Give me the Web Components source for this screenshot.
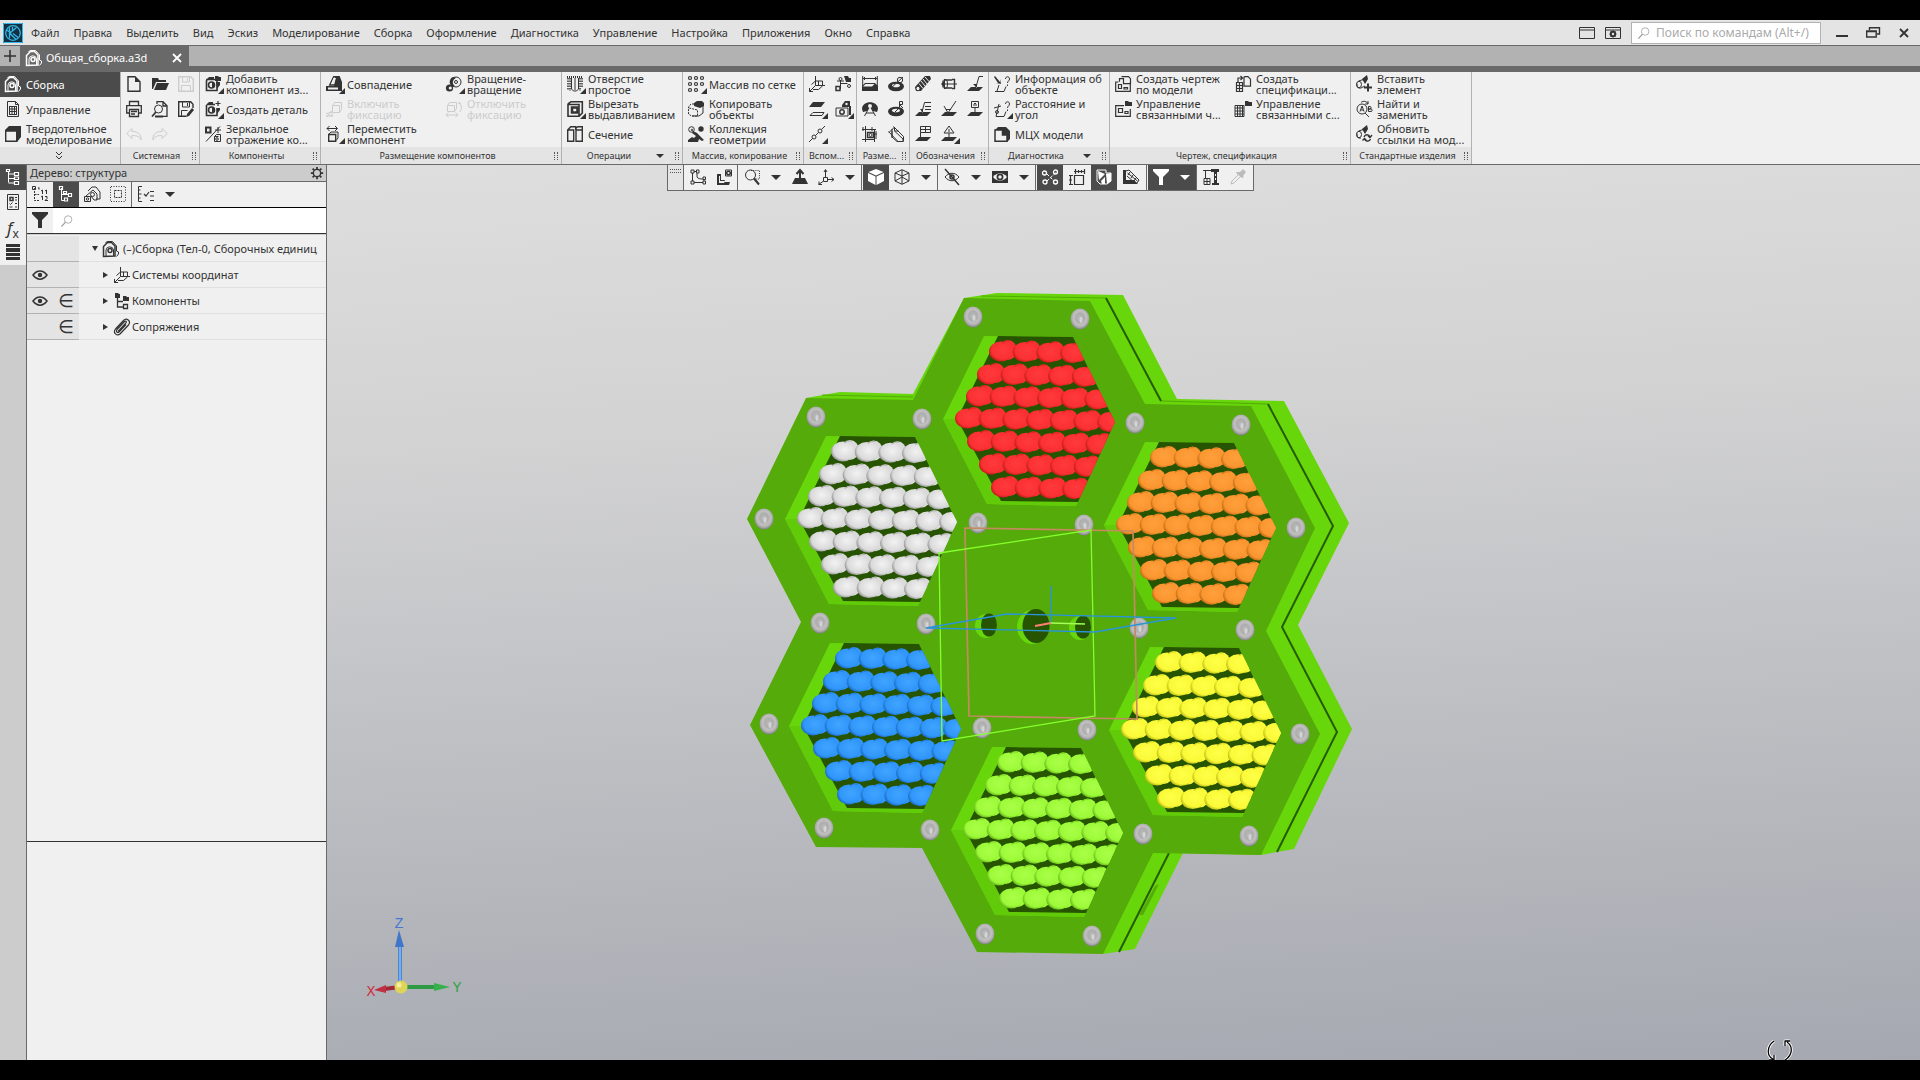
<!DOCTYPE html>
<html lang="ru">
<head>
<meta charset="utf-8">
<title>Общая_сборка.a3d</title>
<style>
  body {
    margin: 0;
    background: #000;
    color: #333;
    font: 11px/16px "Noto Sans", "Open Sans", sans-serif;
  }
</style>
</head>
<body>
<app-window>
  <menu-bar slot="menu"></menu-bar>
  <doc-tabs slot="tabs">Общая_сборка.a3d</doc-tabs>
  <app-ribbon slot="ribbon">
    <ribbon-group more>
      <ribbon-button icon="assembly" selected>Сборка</ribbon-button>
      <ribbon-button icon="sheet">Управление</ribbon-button>
      <ribbon-button icon="solid">Твердотельное<br>моделирование</ribbon-button>
    </ribbon-group>
    <ribbon-group label="Системная" cols="3" small>
      <ribbon-button icon="new" title="Создать"></ribbon-button>
      <ribbon-button icon="open" title="Открыть"></ribbon-button>
      <ribbon-button icon="save" title="Сохранить" disabled></ribbon-button>
      <ribbon-button icon="print" title="Печать"></ribbon-button>
      <ribbon-button icon="preview" title="Просмотр"></ribbon-button>
      <ribbon-button icon="saveas" title="Сохранить как"></ribbon-button>
      <ribbon-button icon="undo" title="Отменить" disabled></ribbon-button>
      <ribbon-button icon="redo" title="Повторить" disabled></ribbon-button>
    </ribbon-group>
    <ribbon-group label="Компоненты">
      <ribbon-button icon="addcomp" menu>Добавить<br>компонент из...</ribbon-button>
      <ribbon-button icon="newpart" menu>Создать деталь</ribbon-button>
      <ribbon-button icon="mirror">Зеркальное<br>отражение ко...</ribbon-button>
    </ribbon-group>
    <ribbon-group label="Размещение компонентов" cols="2">
      <ribbon-button icon="coincide" menu>Совпадение</ribbon-button>
      <ribbon-button icon="rotation" menu>Вращение-<br>вращение</ribbon-button>
      <ribbon-button icon="fixon" disabled>Включить<br>фиксацию</ribbon-button>
      <ribbon-button icon="fixoff" disabled>Отключить<br>фиксацию</ribbon-button>
      <ribbon-button icon="move" menu>Переместить<br>компонент</ribbon-button>
    </ribbon-group>
    <ribbon-group label="Операции" drop>
      <ribbon-button icon="hole" menu>Отверстие<br>простое</ribbon-button>
      <ribbon-button icon="cut" menu>Вырезать<br>выдавливанием</ribbon-button>
      <ribbon-button icon="section">Сечение</ribbon-button>
    </ribbon-group>
    <ribbon-group label="Массив, копирование">
      <ribbon-button icon="grid" menu>Массив по сетке</ribbon-button>
      <ribbon-button icon="copy">Копировать<br>объекты</ribbon-button>
      <ribbon-button icon="collection">Коллекция<br>геометрии</ribbon-button>
    </ribbon-group>
    <ribbon-group label="Вспом..." cols="2" small>
      <ribbon-button icon="lcs" title="Система координат"></ribbon-button>
      <ribbon-button icon="ctrlpoint" title="Контрольная точка"></ribbon-button>
      <ribbon-button icon="plane" title="Плоскость" menu></ribbon-button>
      <ribbon-button icon="bodies" title="Присоединительная точка" menu></ribbon-button>
      <ribbon-button icon="axis" title="Ось" menu></ribbon-button>
    </ribbon-group>
    <ribbon-group label="Разме..." cols="2" small>
      <ribbon-button icon="dimlinear" title="Линейный размер"></ribbon-button>
      <ribbon-button icon="dimdiam" title="Диаметральный размер"></ribbon-button>
      <ribbon-button icon="dimangle" title="Угловой размер"></ribbon-button>
      <ribbon-button icon="dimrad" title="Радиальный размер"></ribbon-button>
      <ribbon-button icon="dimauto" title="Производные размеры"></ribbon-button>
      <ribbon-button icon="dimslant" title="Размер"></ribbon-button>
    </ribbon-group>
    <ribbon-group label="Обозначения" cols="3" small>
      <ribbon-button icon="thread" title="Условное изображение резьбы"></ribbon-button>
      <ribbon-button icon="weld" title="Осевая линия"></ribbon-button>
      <ribbon-button icon="leader" title="Линия-выноска"></ribbon-button>
      <ribbon-button icon="mark" title="Знак маркировки"></ribbon-button>
      <ribbon-button icon="rough" title="Шероховатость"></ribbon-button>
      <ribbon-button icon="base" title="База"></ribbon-button>
      <ribbon-button icon="tolerance" title="Допуск формы"></ribbon-button>
      <ribbon-button icon="position" title="Позиция" menu></ribbon-button>
    </ribbon-group>
    <ribbon-group label="Диагностика" drop>
      <ribbon-button icon="info">Информация об<br>объекте</ribbon-button>
      <ribbon-button icon="distance" menu>Расстояние и<br>угол</ribbon-button>
      <ribbon-button icon="mass">МЦХ модели</ribbon-button>
    </ribbon-group>
    <ribbon-group label="Чертеж, спецификация" cols="2">
      <ribbon-button icon="drawing">Создать чертеж<br>по модели</ribbon-button>
      <ribbon-button icon="spec">Создать<br>спецификаци...</ribbon-button>
      <ribbon-button icon="drawings">Управление<br>связанными ч...</ribbon-button>
      <ribbon-button icon="specs">Управление<br>связанными с...</ribbon-button>
    </ribbon-group>
    <ribbon-group label="Стандартные изделия">
      <ribbon-button icon="insert">Вставить<br>элемент</ribbon-button>
      <ribbon-button icon="find">Найти и<br>заменить</ribbon-button>
      <ribbon-button icon="refresh">Обновить<br>ссылки на мод...</ribbon-button>
    </ribbon-group>
  </app-ribbon>
  <side-rail slot="rail"></side-rail>
  <tree-panel slot="panel" heading="Дерево: структура">
    <tree-row icon="assembly" open>(–)Сборка (Тел-0, Сборочных единиц</tree-row>
    <tree-row icon="lcs" eye>Системы координат</tree-row>
    <tree-row icon="comps" eye member>Компоненты</tree-row>
    <tree-row icon="clip" member>Сопряжения</tree-row>
  </tree-panel>
  <view-toolbar slot="view"></view-toolbar>
  <model-view slot="view"></model-view>
</app-window>

<script>
// glyphs on a 16x16 grid, stroked with currentColor; class f is filled, w is paper coloured
const ICONS = {
  logo: '<path class="f" style="fill:#12303f" d="M-2-2h20v20H-2z"/><g stroke="#35b5e8" stroke-width="1.3"><path d="M-1.500-1.500h19v19h-19z" stroke-width="1"/><circle cx="8" cy="8" r="7.300"/><path d="M4.500 2.500v11M7.500 2v4L4.500 8l6.500 6.500M7.500 6l4-3.500M8 8.500l5 4M1.500 5l5 3"/></g>',
  assembly: '<path d="M.5 15.500V5.500l4-4h4l3.500 3.500v10z" stroke-width="1.500"/><path d="M2.500 1.500L5 .5h4.500l4 4.500v5l2 1v2l-2 2.500"/><path d="M3 15V9a3.800 3.800 0 0 1 7.500 0v6"/><circle cx="7" cy="9.500" r="2" stroke-width="1.500"/>',
  sheet: '<path d="M2.500.5h8l3 3v12h-11z"/><path d="M10.500.5v3h3M4.500 5v9M7 5v9M9.500 5v9M11.500 5v9M4.500 5.500h7M4.500 8h7M4.500 10.500h7M4.500 13.500h7"/>',
  solid: '<path class="f" d="M4 0h12v11l-4 5V5H0V4z"/><path d="M.7 5h11v10.300H.7z" stroke-width="1.400"/>',
  new: '<path d="M2 .7h7l5 5v9.600H2z" stroke-width="1.400"/><path class="f" d="M9 1v5h5z"/>',
  open: '<path class="f" d="M0 2h6l1 2h7v2H4L1 13H0z"/><path class="f" d="M5 7h12l-3 7H2z"/>',
  save: '<path d="M.7.7h12l2.600 2.600v12H.7z" stroke-width="1.400"/><path d="M4.500 1v5h7V1M3.500 15V9.500h9V15M9.500 2v3"/>',
  saveas: '<path d="M15 7V3.300L12.700.7H.7v14.600H8" stroke-width="1.400"/><path d="M4.500 1v5h7V1M3.500 15V9.500h6M9.500 2v3"/><path class="f" d="M14 7l2 2-5 6-3 1 1-3z"/>',
  print: '<path d="M3.500 4.500v-4h9v4M3.500 12H.7V4.700h14.600V12h-3M3.500 8.500h9v7h-9zM5 10.500h6M5 13h4" stroke-width="1.300"/>',
  preview: '<path d="M5 3V.7h6l4 4v10.600h-4M11 1v4h4" stroke-width="1.300"/><circle cx="6.500" cy="8" r="4"/><path d="M4 11l-4 4.500M3 15.500h8" stroke-width="1.800"/>',
  undo: '<path d="M6 2.500L.7 7.500 6 12.500v-3c5 0 8 1 9 4.500.5-6-3-8.500-9-8.500z"/>',
  redo: '<path d="M10 2.500l5.300 5-5.300 5v-3c-5 0-8 1-9 4.500-.5-6 3-8.500 9-8.500z"/>',
  addcomp: '<path d="M2 3.500h10v11H1.500V5z" stroke-width="1.600"/><path class="f" d="M1 4l3-3h5v3zM10 0h3l1 1h2v4h-6z"/><circle cx="6.500" cy="9" r="3" stroke-width="1.600"/><path class="f" d="M7 6a3 3 0 0 1 0 6zM11 6h4v3l-3 4z"/>',
  newpart: '<path d="M2 3.500h8M12 7v7.500H1.500V4" stroke-width="1.600"/><path class="f" d="M1 4l3-3h4v3z"/><path d="M13 0v5M10.500 2.500h5" stroke-width="1.200"/><circle cx="6.500" cy="9" r="3" stroke-width="1.600"/><path class="f" d="M7 6a3 3 0 0 1 0 6zM12 7h3v2l-3 4z"/>',
  mirror: '<path d="M1 1.500h4.500v5H1z" stroke-width="2"/><path d="M1 15.500L15 .5M13 1v6M10 4h6"/><path d="M9.500 10.500l2-2h4v7h-6zM9.500 10.500h4"/><circle cx="12" cy="13" r="1.300"/>',
  coincide: '<path d="M3.700 9l4-8.300h5.500V9z" stroke-width="1.400"/><path class="f" d="M9 1h5l2 5v5H8zM0 10h16v5H0z"/><path class="w" d="M5 8l2.500-6H10L8 8zM2 11.500h10v2H2z"/>',
  rotation: '<circle cx="10" cy="6" r="5"/><circle cx="10" cy="6" r="1.500"/><path class="f" d="M8 1c-5 0-6 8-1 10l2-1c-3-2-3-6 1-8z"/><circle class="f" cx="3.500" cy="12" r="3.600"/><circle class="w" cx="4.300" cy="12" r="1.600"/>',
  fixon: '<path d="M6.500 4.500h7v7h-7zM6.500 4.500l2-3h7v7l-2 3M6 10l-3 2M0 13l5-2 2 4M1 16l2-3 3 3M0 15h7"/>',
  fixoff: '<path d="M1.500 4.500h7v6h-7zM1.500 4.500l2-3h7v6l-2 3M13 2c3 2 3 6 1 9M0 14h12M2.500 11.500L0 14l2.500 2M9.500 11.500L12 14l-2.500 2M12 2h3"/>',
  move: '<path d="M1 2.500h10M3.500 0L1 2.500 3.500 5M9 0l2.500 2.500L9 5"/><path d="M2.700 8.500h7v6.800h-7z" stroke-width="1.400"/><path d="M3 8l2-2h7v6l-2 2.500"/>',
  hole: '<path d="M0 1h16" stroke-width="2" stroke-dasharray="1 1"/><path d="M1 2v12M3 2v13M13 2v13M15 2v9" stroke-width="1.500" stroke-dasharray="1.500 1"/><path d="M4.500 2v11l2 2h3l2-2V2"/><path d="M8 2v12"/>',
  cut: '<path d="M1 3.500h11v11.700H1zM1 3l3-2.300h11.300V12l-3 3" stroke-width="1.600"/><path d="M5 6.500h5.500v5H5z" stroke-width="2.500"/>',
  section: '<path d="M.7 4h6v11.300h-6zM.7 4l3-3.300h5v3M9 4h6.300v11.300H9zM9 4V2l2-1.300h4.300V4" stroke-width="1.400"/>',
  grid: '<g stroke-width="1.200"><circle cx="2" cy="2" r="1.500"/><circle cx="8" cy="2" r="1.500"/><circle cx="14" cy="2" r="1.500"/><circle cx="2" cy="8" r="1.500"/><circle cx="8" cy="8" r="1.500"/><circle cx="14" cy="8" r="1.500"/><circle cx="2" cy="14" r="1.500"/><circle cx="8" cy="14" r="1.500"/></g>',
  copy: '<path class="f" d="M6 2l3-2h5l2 2v3l-4 2-6-2z"/><path d="M15 5v7l-4 3H4"/><path d="M6 3H3L.5 6v7l3 2h6V9L1 7" stroke-dasharray="2 1"/>',
  collection: '<circle cx="3.500" cy="3.500" r="2.800"/><circle cx="4" cy="4" r=".8"/><circle class="f" cx="13" cy="3" r="2.700"/><path class="f" d="M5 5l4 2 7 7-2 1-3-2-1 3H0v-2l4-3 2 1 2-2-4-3z"/>',
  lcs: '<path d="M6.500 9.500V0M6.500 9.500H16M6.500 9.500L.5 15.500M.5 12v3.500H4M2.500 8.500l4-3.500h7v5l-4 3.500H4M9.500 9.500V5"/>',
  ctrlpoint: '<path d="M5.500 4v9M5.500 7.500h7M2 5h7"/><path class="f" d="M9 0h4l1 2h2v4h-5z"/><circle cx="5.500" cy="3" r="1.500"/><circle cx="14" cy="10" r="1.500"/><path d="M1 10.500h4v4H1z" stroke-width="1.500"/>',
  plane: '<path class="f" d="M4 1h12l-4 5H0z"/><path d="M4 11.500h11l-2 3H1z"/>',
  bodies: '<path class="f" d="M1 6h6V4l3-4h5v5h1v9h-2V6z"/><circle class="w" cx="11.500" cy="3" r="1.200"/><path class="w" d="M1 7h12v8H1z" stroke="currentColor"/><circle cx="7" cy="11" r="2.200" stroke-width="1.500"/>',
  axis: '<path d="M0 16L16 0"/><circle class="w" cx="11" cy="5" r="2" stroke="currentColor"/><circle class="w" cx="5" cy="11" r="2" stroke="currentColor"/>',
  dimlinear: '<path d="M.7 0v11M15.300 0v11M1 2.500h14M3 1L1.500 2.500 3 4M13 1l1.500 1.500L13 4"/><path class="f" d="M0 10l3-3h10l3 3v5H0z"/><path class="w" d="M1 10.500l2.500-2.500h9L10 10.500z"/>',
  dimdiam: '<ellipse class="f" cx="8" cy="10.500" rx="8" ry="4.800"/><ellipse class="w" cx="8" cy="9.500" rx="4" ry="1.800"/><path d="M2 13L15 1"/><circle cx="12" cy="4" r="2.700"/>',
  dimangle: '<path class="f" d="M0 8c0-9 16-9 16 0l-1 3-4-1-3-5-3 5-4 1z"/><path d="M8 5L2.500 15M8 5l5.500 10M4 12h8"/><circle class="w" cx="8" cy="5" r="2"/>',
  dimrad: '<ellipse class="f" cx="8" cy="10.500" rx="8" ry="4.800"/><ellipse class="w" cx="8" cy="9.500" rx="4" ry="1.800"/><path d="M7 11l4-4M11.500 6.500v-6h3v3h-3l3.500 3.500"/>',
  dimauto: '<path d="M3.500 0v16M12.500 3v13M0 3.500h14M0 13.500h13M1 1v4M14 5v8M10 1v4M15 8h-3"/><path d="M5.500 6.500h6v5h-6z" stroke-width="1.500"/><circle cx="8.500" cy="9" r="1.500"/>',
  dimslant: '<path d="M1 6.500L6.500 1v4l8.500 8v2.500H9L4 11V5M6.500 5h4M.5 5.500L10 15.500M5.500.5L15.500 10.500v5M4 3v9"/>',
  thread: '<path class="f" d="M10 0h5l1 3L6 15H1l-1-4z"/><g stroke="#f0f0f0"><path d="M4 7.500l4 5M6 5l4 5M8 3l4 5M10 1l4 4.500"/></g><ellipse class="w" cx="3" cy="12.500" rx="2" ry="2.300" stroke="currentColor"/>',
  weld: '<path d="M0 8h16"/><path d="M3 4h8M3 12h8M11 3.500h2.500v9H11" stroke-width="1.400"/><ellipse cx="4" cy="8" rx="2.500" ry="4.500"/><path class="f" d="M4 3.500v9c-3-1-3-8 0-9z"/>',
  leader: '<path d="M16 .5h-4L9 11"/><path class="f" d="M6 8l4 4V8zM4 11h12l-4 4H0z"/>',
  mark: '<path d="M16 1.500H9.500L7 11M10 5.500h6M10 8.500h6"/><path class="f" d="M5 8l3 4V8zM4 11h12l-4 4H0z"/>',
  rough: '<path d="M3 5l4 7L15 0M5 8.500h5"/><path class="f" d="M4 11h12l-4 4H0z"/>',
  base: '<path d="M4.500.5h7v6h-7zM8 6.500V11M7 5V3l1-1 1 1v2"/><path class="f" d="M4 11h12l-4 4H0z"/>',
  tolerance: '<path d="M5.500.5h10v6h-10zM10.500.5v6M5.500 3.500h10M5.500 6.500V12"/><path class="f" d="M4 11h12l-4 4H0z"/>',
  position: '<path d="M8 0L3 7h10zM8 3v3M8 7v4"/><path class="f" d="M4 11h12l-4 4H0z"/>',
  info: '<path class="f" d="M1 0l5 6V3l1 5-5-1h2L0 1z"/><path d="M1 15.500h9l2-5M5 9l-2 6"/><path d="M11.500 3c0-3 4-3 4 0 0 2-2 2-2 4M13.500 8.500V10"/>',
  distance: '<path d="M0 7l7-2M5 3L2 15.500h8l2-5"/><circle cx="3" cy="11" r="1.500"/><path d="M11.500 3c0-3 4-3 4 0 0 2-2 2-2 4M13.500 8.500V10"/>',
  mass: '<path class="f" d="M1 4l3-3h8l4 4v8l-3 3V9H9V4z"/><path d="M1 4h7.500v5H13v6.300H1z" stroke-width="1.500"/>',
  drawing: '<path d="M3.500 6H.7v9.300h14.600V6M6.500.7h7l2 2v5h-7v-5h-4v3" stroke-width="1.200"/><path d="M3.500 8.500h3v4h-3zM9 11.500h3.500v1.500H9z" stroke-width="1.200"/>',
  drawings: '<path d="M9 4.700H.7v10.600h14.600V8" stroke-width="1.200"/><path class="f" d="M10 0h3l1 1h3v4h-7z"/><path d="M3.500 7.500h4v4h-4zM10 10.500h3v2h-3z" stroke-width="1.200"/>',
  spec: '<path d="M1.500 6.500h6v9h-6zM4.500 6.500v9M1.500 9.500h6M1.500 12.500h6M3 6V2h4M5.500 0l2 2-2 2M10 .7h3l2.500 2.500v7H9v-9z" stroke-width="1.200"/>',
  specs: '<path d="M0 4.500h9v11H0zM0 7h9M0 10h9M0 13h9M2.500 4v12M5 4v12M7.500 4v12"/><path class="f" d="M10 0h3l1 1h3v4h-7z"/>',
  insert: '<path d="M2.500 5l5-1.500M1 7.500c0 5 2 5 4 4.500l4-2"/><ellipse cx="3" cy="8.500" rx="2.500" ry="3.200"/><path class="f" d="M6 3l5-4 1 4-3 5z"/><path d="M12 7.500v8M8 11.500h8" stroke-width="2"/>',
  find: '<circle cx="6" cy="8" r="5"/><path d="M4 10.500L6 5l2 5.500M5 9h2M12.500 5.500v5H15c1.500 0 1.500-2.500 0-2.500h-2.500H14c1.500 0 1.500-2.500 0-2.500zM9 12l4 4M5 1.500C7-.5 11 0 12 3M12 0v3H9"/>',
  refresh: '<path d="M2.500 5l5-1.500M1 7.500c0 5 2 5 4 4.500"/><ellipse cx="3" cy="8.500" rx="2.500" ry="3.200"/><path class="f" d="M6 3l5-4 1 4-3 5z"/><path d="M8 11c1-3 5-3 6 0M16 9l-2 2.500L12 10M14.500 13c-1 3-5 3-6 0M6.500 14.500l2-2 2 2" stroke-width="1.300"/>',
  treetab: '<path d="M3.500 2v11.500M3.500 5H9M3.500 9.500H9M3.500 14H9"/><path d="M1.500.5h3v2h-3zM9.500 3.500h4v3h-4zM9.500 8h4v2.500h-4zM9.500 12.500h4v3h-4z" stroke-width="1.200"/>',
  props: '<path d="M2.500.5h11v15h-11z"/><path d="M5 3.500h3v3H5z" stroke-width="1.500"/><path d="M10 3.500h2M10 6h2M4.500 9.500l1 1 2-2M10 9.500h2M4.500 13h3M10 13h2"/>',
  layers: '<path class="f" d="M1 0h14v3H1zM1 4h14v4H1zM1 9h14v3H1zM1 13h14v3H1z"/>',
  numbered: '<path d="M2.500 2v12.500H7M2.500 8.500H7" stroke-dasharray="2 1"/><path d="M.5.5h3v3h-3zM7 1.500v2M6 2h1M10.500 4v4M9 5l1.500-1M14.500 4v4M13 5l1.500-1M10.500 10v4M9 11l1.500-1M13 10.500h2v2l-2 2h3"/>',
  struct: '<path d="M3.500 2v12.500H7M3.500 8.500H10"/><path d="M1.500.5h3v3h-3zM5.500 5.500h3v2h-3zM10.500 7.500h3v3h-3zM6.500 12h3v3h-3z" stroke-width="1.200"/>',
  parts: '<path d="M4 5l4-4h4l4 5v7h-4"/><path d="M.5 10.500h6v5h-6zM2 10L9 4l4 4v6h-3L7 10"/><circle cx="8.500" cy="8.500" r="2"/><circle cx="3.500" cy="13" r="1.200"/>',
  area: '<path d="M1 .5h15M1 15.500h15M.5 1v15M15.500 1v15" stroke-dasharray="1 1.500"/><path d="M4.500 4.500h7v7h-7z" stroke-dasharray="2 1"/>',
  checks: '<path d="M4 .5H.5v15H4M.5 8h3M.5 4h2M.5 12h2"/><path d="M6 8l2 2 3-4M12 5.500h4M12 10h4M12 14.500h4" stroke-width="1.200"/>',
  funnel: '<path class="f" d="M0 0h16v2l-6 6v8H6V8L0 2z"/>',
  loupe: '<circle cx="9.500" cy="6" r="5"/><path d="M6 9.500l-5.500 6" stroke-width="1.600"/>',
  gear: '<circle cx="8" cy="8" r="4.200" stroke-width="1.600"/><path d="M8 1v2.500M8 12.500V15M1 8h2.500M12.500 8H15M3 3l1.800 1.800M11.200 11.200L13 13M13 3l-1.800 1.800M4.800 11.200L3 13" stroke-width="2"/>',
  eye: '<path d="M1 8c4-5.500 10-5.500 14 0-4 5.500-10 5.500-14 0z" stroke-width="1.500"/><circle class="f" cx="8" cy="8" r="2.200"/>',
  comps: '<path class="f" d="M1 0h3l1 1h1v4H1zM9 3h3l1 1h2v4H9z"/><path d="M3.500 5v9H10M3.500 8.500H9M9.500 11.500h4v4h-4z" stroke-width="1.300"/>',
  clip: '<path d="M6 15l8.500-9c3-4-2-8-5-4.500L1.500 10c-3 4 1.500 7.500 4.500 5M4 12.500l8-8.500c1-1.500-.5-2.500-1.500-1.500L3 10.500c-1.500 2 .5 4 2 2.500l7-7.500" stroke-width="1.200"/>',
  contour: '<path d="M2.500 2v11M2.500 13.500H14M2.500 2.500H7V8c1 2 4 2 7 2v3"/><g><path class="w" stroke="currentColor" d="M1 1h3v3H1zM6.500 1h2.500v3H6.500zM1 12h3v3H1zM13 12h2.500v3H13zM13 8h2.500v2.500H13z"/></g>',
  sketch: '<path class="f" d="M1 5h4v6h4l-1 2h6l-1 3H1z"/><path class="w" d="M3 7h1v5h5l-1 2H3z"/><path d="M9.500 1h6v6h-6z"/><circle cx="12.500" cy="4" r="1.800" stroke-width="1.500"/>',
  zoomarea: '<circle cx="6.500" cy="6" r="5"/><path d="M10 9.500l5 6" stroke-width="2"/><path d="M7 1.500h8.500V10H11" stroke-dasharray="1 1.200"/>',
  normal: '<path class="f" d="M3 9h10l3 6H0z"/><path d="M8 12V2M4.500 5L8 1l3.500 4" stroke-width="2"/>',
  orient: '<path d="M5.500 8.500h4v4h-4zM7.500 8V1M9.500 10.500H16M5 12.500L.5 15.500M6 3l1.500-2.500L9 3M13.500 8.500l2.500 2-2.500 2M1 12.500v3h3"/>',
  cube: '<path class="f" d="M8 0l7.500 3L8 6.500.5 3zM0 4l7.500 3.500V16L0 12zM16 4L8.500 7.500V16l7.500-4z"/>',
  wire: '<path d="M8 .7l7 3.300v8L8 15.300 1 12V4zM1 4l7 3 7-3M8 7v8M1 12l7-4 7 4M8 1v6"/>',
  hide: '<path d="M1 8c4-5 10-5 14 0-4 5-10 5-14 0z"/><circle cx="8" cy="8" r="2" stroke-width="1.500"/><path d="M1 0l14 16" stroke-width="1.500"/>',
  eyebox: '<path class="f" d="M0 2h16v12H0z"/><path class="w" d="M1 8c4-5 10-5 14 0-4 5-10 5-14 0z"/><circle cx="8" cy="8" r="2.600" stroke-width="1.700"/>',
  points: '<path d="M5 12L15 2.500M5 5l7 7" stroke-dasharray="3 1.500"/><g stroke-width="1.300"><circle cx="2.500" cy="4" r="2"/><circle cx="13.500" cy="3" r="2"/><circle cx="3" cy="13" r="2"/><circle cx="13.500" cy="13" r="2"/></g>',
  dims: '<path d="M5.500 6.500h9v9h-9zM5 2.500h11M6.500 0v5M9.500 1v3M12.500 1v3M15.500 0v5M1.500 6v10M0 6.500h4M0 11h3M0 15.500h4" stroke-width="1.200"/>',
  shaded: '<path d="M1 1h9v3h5v8l-4 3H4l-3-3z"/><path class="f" d="M2 2l7 3-6 6zM10 5l5-1v8l-4 3zM5 12l4-4v7H6z"/>',
  ruler: '<path class="f" d="M0 1h3v10h8l4 4H0z"/><path d="M4.500 4l10 8M4 7l8 7M3 2l3-1 10 10-2 3M7 3L5 6M10 6L8 9M13 9l-2 3"/>',
  crane: '<path class="f" d="M8 0h8v3h-2v11h2v2H9v-2h2V3H8z"/><path class="w" d="M12 5h1v2h-1zM12 9h1v2h-1z"/><path d="M0 1.500h9M2.500 2v7M1 9.500h6v6H1zM1 12.500h6M4 9.500v6"/>',
  pipette: '<path class="f" d="M10 3l3-3 3 3-3 4 1 1-2 1-6-5 1-1z"/><path d="M9 5L2 12l-1 3 3-1 7-7"/>',
  winplain: '<path d="M.5 2.500h15v11H.5zM0 5h16"/>',
  wingear: '<path d="M.5 2.500h15v11H.5zM0 5h16"/><circle cx="8" cy="9" r="2.200" stroke-width="2"/><path d="M8 5.500v7M4.500 9h7M5.500 6.500l5 5M10.500 6.500l-5 5"/><circle class="w" cx="8" cy="9" r="1.200"/>',
  min: '<path d="M2 11h12" stroke-width="2"/>',
  restore: '<path d="M1.700 6h9.500v6H1.700zM4.500 5V2.700h10V9H12M1 6.500h10" stroke-width="1.400"/>',
  close: '<path d="M4 4l8 8M12 4l-8 8" stroke-width="1.800"/>',
  chevrons: '<path d="M5 4l3 3 3-3M5 8l3 3 3-3"/>',
  plus: '<path d="M8 2v12M2 8h12" stroke-width="1.600"/>'
};

function define(tag, render) {
  customElements.define(tag, class extends HTMLElement {
    connectedCallback() {
      if (this.shadowRoot) return;
      const root = this.attachShadow({mode: 'open'});
      const template = document.createElement('template');
      template.innerHTML = render(this);
      root.appendChild(template.content.cloneNode(true));
    }
  });
}

const buttonReset = `
  button {
    border: 0;
    margin: 0;
    padding: 0;
    background: none;
    color: inherit;
    font: inherit;
    text-align: left;
  }
`;

define('ui-icon', el => `
  <style>
    :host { display: block; width: 16px; height: 16px; flex: none; }
    svg { display: block; width: 100%; height: 100%; overflow: visible; fill: none; stroke: currentColor; }
    .f { fill: currentColor; stroke: none; }
    .w { fill: var(--paper, #f0f0f0); }
    .w:not([stroke]) { stroke: none; }
  </style>
  <svg viewBox="0 0 16 16" aria-hidden="true">${ICONS[el.getAttribute('name')]}</svg>
`);

define('app-window', () => `
  <style>
    :host { display: flex; flex-direction: column; box-sizing: border-box; height: 100vh; padding: 20px 0; }
    .body { flex: 1; display: flex; min-height: 0; background: #ccc; }
    .view { flex: 1; position: relative; min-width: 0; }
  </style>
  <slot name="menu"></slot>
  <slot name="tabs"></slot>
  <slot name="ribbon"></slot>
  <div class="body">
    <slot name="rail"></slot>
    <slot name="panel"></slot>
    <main class="view"><slot name="view"></slot></main>
  </div>
`);

const MENU = ['Файл', 'Правка', 'Выделить', 'Вид', 'Эскиз', 'Моделирование', 'Сборка', 'Оформление',
  'Диагностика', 'Управление', 'Настройка', 'Приложения', 'Окно', 'Справка'];

define('menu-bar', () => `
  <style>
    ${buttonReset}
    :host { display: flex; align-items: center; height: 25px; background: #e4e4e4; border-bottom: 1px solid #696969; --paper: #e4e4e4; }
    .logo { margin: 0 10px 0 5px; }
    nav { display: flex; gap: 14px; flex: 1; }
    .tools { display: flex; align-items: center; gap: 10px; margin-right: 10px; }
    label { display: flex; align-items: center; box-sizing: border-box; width: 190px; height: 22px; padding: 0 6px; gap: 6px; border: 1px solid #b2b2b2; background: #fff; color: #999; font-size: 12px; }
    label ui-icon { width: 12px; height: 12px; }
    input { flex: 1; min-width: 0; border: 0; padding: 0; background: none; font: inherit; outline: 0; }
    input::placeholder { color: #aaa; opacity: 1; }
    .win { display: flex; gap: 15px; margin: 0 8px 0 13px; }
  </style>
  <ui-icon class="logo" name="logo"></ui-icon>
  <nav>${MENU.map(m => `<button>${m}</button>`).join('')}</nav>
  <div class="tools">
    <button aria-label="Окно"><ui-icon name="winplain"></ui-icon></button>
    <button aria-label="Настройка окна"><ui-icon name="wingear"></ui-icon></button>
  </div>
  <label><ui-icon name="loupe"></ui-icon><input type="text" placeholder="Поиск по командам (Alt+/)" aria-label="Поиск по командам"></label>
  <div class="win">
    <button aria-label="Свернуть"><ui-icon name="min"></ui-icon></button>
    <button aria-label="Восстановить"><ui-icon name="restore"></ui-icon></button>
    <button aria-label="Закрыть"><ui-icon name="close"></ui-icon></button>
  </div>
`);

define('doc-tabs', () => `
  <style>
    ${buttonReset}
    :host { display: flex; height: 20px; background: #b2b2b2; border-bottom: 6px solid #696969; }
    .add { width: 20px; padding-left: 2px; }
    .tab { display: flex; align-items: center; box-sizing: border-box; width: 169px; padding: 3px 4px 0 6px; gap: 4px; background: #696969; color: #fff; --paper: #696969; }
    .name { flex: 1; white-space: nowrap; }
  </style>
  <button class="add" aria-label="Новый документ"><ui-icon name="plus"></ui-icon></button>
  <div class="tab">
    <ui-icon name="assembly"></ui-icon>
    <span class="name"><slot></slot></span>
    <button aria-label="Закрыть вкладку"><ui-icon name="close"></ui-icon></button>
  </div>
`);

define('app-ribbon', () => `
  <style>
    :host { display: flex; background: #f0f0f0; border-bottom: 1px solid #696969; }
  </style>
  <slot></slot>
`);

define('ribbon-group', el => `
  <style>
    ${buttonReset}
    :host { display: flex; flex-direction: column; flex: none; border-right: 1px solid #b2b2b2; }
    .cells {
      display: grid;
      grid-template-columns: repeat(${el.getAttribute('cols') || 1}, ${el.hasAttribute('small') ? 26 : 120}px);
      grid-template-rows: repeat(3, 25px);
    }
    footer { display: flex; align-items: center; height: 17px; background: #e4e4e4; font-size: 9px; padding-right: 3px; }
    .name { flex: 1; text-align: center; white-space: nowrap; }
    .drop { border: solid transparent; border-width: 4px 4px 0; border-top-color: #333; margin-right: 11px; }
    .grip { width: 2px; height: 8px; border: dotted #555; border-width: 0 1px; }
    .more { flex: 1; display: flex; justify-content: center; }
  </style>
  <div class="cells"><slot></slot></div>
  <footer>
    ${el.hasAttribute('more')
      ? '<button class="more" aria-label="Ещё"><ui-icon name="chevrons"></ui-icon></button>'
      : `<span class="name">${el.getAttribute('label')}</span>
         ${el.hasAttribute('drop') ? '<span class="drop"></span>' : ''}
         <span class="grip"></span>`}
  </footer>
`);

define('ribbon-button', el => `
  <style>
    ${buttonReset}
    :host { display: block; min-width: 0; }
    :host([selected]) { background: #4b4b4b; color: #fff; --paper: #4b4b4b; }
    :host([disabled]) { color: #ccc; }
    button { display: flex; align-items: center; width: 100%; height: 25px; padding: 0 0 1px 5px; line-height: 11px; white-space: nowrap; }
    .icon { position: relative; width: 21px; flex: none; }
    :host([menu]) .icon::after {
      content: "";
      position: absolute;
      right: 2px;
      bottom: -2px;
      border-left: 6px solid transparent;
      border-bottom: 6px solid #333;
    }
  </style>
  <button ${el.hasAttribute('disabled') ? 'disabled' : ''} ${el.title ? `aria-label="${el.title}"` : ''}>
    <span class="icon"><ui-icon name="${el.getAttribute('icon')}"></ui-icon></span>
    <span><slot></slot></span>
  </button>
`);

define('tool-button', el => `
  <style>
    ${buttonReset}
    :host { display: block; background: #f0f0f0; }
    :host([on]) { background: #4b4b4b; color: #fff; --paper: #4b4b4b; }
    :host([disabled]) { color: #bbb; }
    button { display: flex; align-items: center; justify-content: center; width: 26px; height: 25px; padding-bottom: 1px; }
    :host([drop]) button { width: 22px; }
    .arrow { border: solid transparent; border-width: 5px 5px 0; border-top-color: currentColor; }
  </style>
  <button aria-label="${el.title}" ${el.hasAttribute('disabled') ? 'disabled' : ''}>
    ${el.hasAttribute('drop') ? '<span class="arrow"></span>' : `<ui-icon name="${el.getAttribute('icon')}"></ui-icon>`}
  </button>
`);

define('side-rail', () => `
  <style>
    ${buttonReset}
    :host { display: block; width: 26px; border-right: 1px solid #696969; background: #ccc; }
    .fx { display: block; width: 26px; height: 25px; background: #f0f0f0; text-align: center; font: italic 17px/20px "Noto Sans", sans-serif; }
    sub { font-size: 12px; line-height: 1px; font-style: normal; }
  </style>
  <tool-button icon="treetab" title="Дерево" on></tool-button>
  <tool-button icon="props" title="Параметры"></tool-button>
  <button class="fx" aria-label="Переменные">f<sub>x</sub></button>
  <tool-button icon="layers" title="Слои"></tool-button>
`);

define('tree-panel', el => `
  <style>
    ${buttonReset}
    :host { display: flex; flex-direction: column; width: 299px; border-right: 1px solid #696969; background: #f0f0f0; overflow: hidden; }
    header { display: flex; align-items: center; justify-content: space-between; height: 16px; padding: 0 1px 0 3px; background: #ccc; border-bottom: 1px solid #696969; }
    header ui-icon { width: 14px; height: 14px; margin-right: 1px; }
    .tools { display: flex; border-bottom: 1px solid #000; }
    .sep { width: 1px; background: #696969; margin-right: 1px; }
    .filter { display: flex; height: 25px; background: #fff; border-bottom: 1px solid #333; }
    label { flex: 1; display: flex; align-items: center; gap: 6px; padding-left: 8px; color: #999; }
    label ui-icon { width: 12px; height: 12px; }
    input { flex: 1; min-width: 0; border: 0; padding: 0; outline: 0; font: inherit; }
    .rows { flex: 1; padding-top: 1px; border-top: 1px solid #ccc; }
    .lower { box-sizing: border-box; height: 219px; border-top: 1px solid #333; }
  </style>
  <header><span>${el.getAttribute('heading')}</span><button aria-label="Настройка дерева"><ui-icon name="gear"></ui-icon></button></header>
  <div class="tools">
    <tool-button icon="numbered" title="Последовательность"></tool-button>
    <tool-button icon="struct" title="Структура" on></tool-button>
    <tool-button icon="parts" title="Типы"></tool-button>
    <tool-button icon="area" title="Зоны"></tool-button>
    <span class="sep"></span>
    <tool-button icon="checks" title="Состав"></tool-button>
    <tool-button drop title="Состав, список"></tool-button>
  </div>
  <div class="filter">
    <tool-button icon="funnel" title="Фильтр"></tool-button>
    <label><ui-icon name="loupe"></ui-icon><input type="text" aria-label="Поиск в дереве"></label>
  </div>
  <div class="rows"><slot></slot></div>
  <div class="lower"></div>
`);

define('tree-row', el => `
  <style>
    :host { display: flex; align-items: stretch; height: 26px; overflow: hidden; white-space: nowrap; }
    .flags { display: flex; flex: none; box-sizing: border-box; width: 52px; background: #e4e4e4; border-bottom: 1px solid #b2b2b2; }
    .flags > * { width: 26px; display: flex; align-items: center; justify-content: center; font: 18px/20px "DejaVu Sans", sans-serif; }
    .item { flex: 1; display: flex; align-items: center; gap: 2px; padding-left: 24px; border-bottom: 1px solid #e0e0e0; }
    :host([open]) .item { padding-left: 13px; gap: 4px; }
    .arrow { border-style: solid; border-color: transparent transparent transparent #333; border-width: 3px 0 3px 5px; margin-right: 4px; }
    :host([open]) .arrow { border-color: #333 transparent transparent; border-width: 5px 3px 0; margin-right: 1px; }
  </style>
  <span class="flags">
    <span>${el.hasAttribute('eye') ? '<ui-icon name="eye"></ui-icon>' : ''}</span>
    <span>${el.hasAttribute('member') ? '∈' : ''}</span>
  </span>
  <span class="item">
    <span class="arrow"></span>
    <ui-icon name="${el.getAttribute('icon')}"></ui-icon>
    <span><slot></slot></span>
  </span>
`);

define('view-toolbar', () => `
  <style>
    :host { position: absolute; z-index: 1; top: 0; left: 340px; display: flex; background: #f0f0f0; border: solid #696969; border-width: 0 1px 1px; }
    .grip { width: 15px; background: #e4e4e4; }
    .grip::before { content: ""; display: block; width: 11px; height: 2px; margin: 4px 2px; border: dotted #555; border-width: 1px 0; }
    .set { display: flex; padding-left: 1px; border-left: 1px solid #696969; }
    .gaps { gap: 1px; padding-right: 2px; }
  </style>
  <div class="grip"></div>
  <div class="set">
    <tool-button icon="contour" title="Эскиз"></tool-button><tool-button icon="sketch" title="Эскиз детали"></tool-button>
  </div>
  <div class="set">
    <tool-button icon="zoomarea" title="Масштаб"></tool-button><tool-button drop title="Масштаб, список"></tool-button>
    <tool-button icon="normal" title="Нормально к"></tool-button><tool-button icon="orient" title="Ориентация"></tool-button>
    <tool-button drop title="Ориентация, список"></tool-button>
  </div>
  <div class="set">
    <tool-button icon="cube" title="Полутоновое" on></tool-button><tool-button icon="wire" title="Каркас"></tool-button>
    <tool-button drop title="Отображение, список"></tool-button>
  </div>
  <div class="set">
    <tool-button icon="hide" title="Скрыть"></tool-button><tool-button drop title="Скрыть, список"></tool-button>
    <tool-button icon="eyebox" title="Видимость"></tool-button><tool-button drop title="Видимость, список"></tool-button>
  </div>
  <div class="set gaps">
    <tool-button icon="points" title="Точки" on></tool-button><tool-button icon="dims" title="Размеры"></tool-button>
    <tool-button icon="shaded" title="Упрощения" on></tool-button><tool-button icon="ruler" title="Линейка"></tool-button>
  </div>
  <div class="set">
    <tool-button icon="funnel" title="Фильтры" on></tool-button><tool-button drop title="Фильтры, список" on></tool-button>
  </div>
  <div class="set gaps">
    <tool-button icon="crane" title="Сборка"></tool-button><tool-button icon="pipette" title="Свойства" disabled></tool-button>
  </div>
`);

// every cell is the red one shifted by dx, dy
const CELLS = [
  {id: 'red', dx: 0, dy: 0, light: '#ff3a3c', color: '#fb3033', dark: '#b81a18'},
  {id: 'white', dx: -158, dy: 100, light: '#f2f2f2', color: '#dadada', dark: '#8a8a8a'},
  {id: 'orange', dx: 161, dy: 106, light: '#ffa03c', color: '#fb9630', dark: '#b86812'},
  {id: 'blue', dx: -154, dy: 307, light: '#40a4ff', color: '#3096fa', dark: '#1a66b8'},
  {id: 'green', dx: 8, dy: 411, light: '#aaff48', color: '#9cfa38', dark: '#62b018'},
  {id: 'yellow', dx: 166, dy: 311, light: '#ffff48', color: '#fafa38', dark: '#b4b412'}
];
const ROWS = [[1001, 351, 4], [989, 374, 5], [978, 396, 6], [967, 418, 7], [979, 441, 6], [991, 464, 5], [1003, 487, 4]];
const SCREWS = [[973, 317], [1080, 319], [922, 419], [816, 417], [1135, 423], [1241, 425], [764, 519], [978, 523],
  [1084, 525], [1296, 528], [820, 623], [926, 624], [1139, 628], [1245, 630], [769, 724], [982, 728], [1087, 730],
  [1300, 734], [824, 828], [930, 830], [1143, 834], [1249, 836], [985, 934], [1092, 936]];

function cell({id, dx, dy}) {
  const balls = ROWS.map(([x, y, n]) => {
    let row = '';
    for (let i = 0; i < n; i++) {
      const cx = x + i * 23.7;
      const cy = y + i * 0.6;
      row += `
        <ellipse class="bump" cx="${cx + 7}" cy="${cy - 1}" rx="9" ry="10"/>
        <ellipse cx="${cx}" cy="${cy + 0.5}" rx="12" ry="10"/>
        <path class="edge" d="M${cx + 1} ${cy - 8}q4-3 8-2"/>`;
    }
    return row;
  }).join('');
  return `
    <g transform="translate(${dx} ${dy})">
      <path fill="#67d60a" d="M984 336L1073 337 1115 422 1076 506 987 504 943 419z"/>
      <path fill="#61cb09" d="M943 419L957 419 1001 501 1078 502 1076 506 987 504z"/>
      <path fill="#265400" d="M998 336L1073 337 1115 422 1078 502 1001 501 957 419z"/>
      <g clip-path="url(#opening)" class="${id}" fill="url(#ball-${id})">${balls}</g>
    </g>`;
}

define('model-view', () => `
  <style>
    :host { display: block; height: 100%; background: linear-gradient(177deg, #dedede, #d2d2d3 30%, #a5a8b0); }
    svg { display: block; width: 100%; height: 100%; }
    text { font: 15px "Liberation Mono", monospace; text-anchor: middle; }
    .edge { fill: none; stroke-opacity: .5; }
    ${CELLS.map(c => `.${c.id} .bump { fill: ${c.color}; } .${c.id} .edge { stroke: ${c.dark}; }`).join('\n')}
  </style>
  <svg viewBox="327 165 1593 895" preserveAspectRatio="xMidYMid slice" role="img" aria-label="Модель сборки">
    <defs>
      <clipPath id="opening"><path d="M984 336L1073 337 1115 422 1076 506 987 504 943 419z"/></clipPath>
      ${CELLS.map(c => `
        <radialGradient id="ball-${c.id}" cx=".58" cy=".42" r=".62">
          <stop offset="0" stop-color="${c.light}"/>
          <stop offset=".75" stop-color="${c.color}"/>
          <stop offset="1" stop-color="${c.dark}"/>
        </radialGradient>`).join('')}
      <radialGradient id="screw" cx=".5" cy=".45" r=".55">
        <stop offset="0" stop-color="#bcbcbc"/><stop offset=".4" stop-color="#adadad"/>
        <stop offset=".6" stop-color="#c2c2c2"/><stop offset=".8" stop-color="#adadad"/><stop offset="1" stop-color="#7c7c7c"/>
      </radialGradient>
    </defs>
    <path fill="#67d60a" d="M964 298L997 293 1123 295 1177 399 1284 401 1349 523 1298 625 1352 729 1294 849 1261 855 1183 853 1135 949 1103 954 1090 700 806 398 840 392 913 394z"/>
    <path fill="none" stroke="#55ab09" d="M981 296L1106 298M1161 401L1268 404M822 395L913 397"/>
    <path fill="none" stroke="#265c00" stroke-width="2" d="M1106 298L1161 401M1268 404L1333 526 1282 627 1337 732 1277 852M1169 853L1119 952"/>
    <path fill="#55ab09" d="M1159 884L1155 886 1139 915 1143 915z"/>
    <path fill="#55ab09" d="M964 298L1090 301 1145 404 1251 406 1315 528 1266 631 1320 734 1261 855 1153 853 1103 954 977 952 922 848 816 847 750 725 801 622 747 519 806 398 913 400z"/>
    ${CELLS.map(cell).join('')}
    <g fill="#67d60a"><ellipse cx="986" cy="626" rx="11" ry="12"/><ellipse cx="1032" cy="627" rx="15" ry="17"/><ellipse cx="1080" cy="628" rx="11" ry="12"/></g>
    <g fill="#265400"><ellipse cx="989" cy="625" rx="8" ry="11.500"/><ellipse cx="1036" cy="626" rx="13.500" ry="17"/><ellipse cx="1083" cy="627" rx="8" ry="11.500"/></g>
    ${SCREWS.map(([x, y]) => `<ellipse cx="${x}" cy="${y}" rx="9.500" ry="10.500" fill="url(#screw)"/><ellipse cx="${x + 1}" cy="${y + 1}" rx="1.500" ry="3" fill="#d4d4d4"/>`).join('')}
    <g fill="none" stroke-width="1.300">
      <path stroke="#c48a60" stroke-width="1.700" d="M965 528L1133 531 1137 719 969 716z"/>
      <path stroke="#84ff2c" d="M939 553L1091 530 1095 716 942 741z"/>
      <path stroke="#2a94d8" d="M926 628L1007 614 1176 618 1095 632z"/>
      <path stroke="#2a94d8" d="M1051 623V586"/>
      <path stroke="#a4ff58" d="M1051 623L1085 624"/>
      <path stroke="#ff8070" stroke-width="2" d="M1051 623L1035 626"/>
    </g>
    <g>
      <path stroke="#4a86d8" stroke-width="4" d="M400 984V944"/><path stroke="#a8d4f4" d="M400 984V944"/>
      <path fill="#3f76c8" d="M399 930L404 947H395z"/>
      <path stroke="#2f9a44" stroke-width="4" d="M403 987H436"/>
      <path fill="#36b04a" d="M450 987L434 983V991z"/>
      <path stroke="#a02838" stroke-width="4" d="M400 987L384 989"/>
      <path fill="#c03040" d="M374 990L386 985V993z"/>
      <circle cx="401" cy="987" r="6.500" fill="#e0d458"/><circle cx="399" cy="985" r="2.500" fill="#f4efa0"/>
      <text x="399" y="928" fill="#4a78d0">Z</text>
      <text x="457" y="992" fill="#36a048">Y</text>
      <text x="371" y="996" fill="#d03040">X</text>
    </g>
    <g fill="none" stroke-linejoin="round">
      <path stroke="#fff" stroke-width="3" d="M1774 1041C1766 1047 1767 1056 1773 1059M1774 1055V1060H1769M1785 1060C1793 1055 1793 1046 1787 1042M1785 1046V1041H1790"/>
      <path stroke="#000" stroke-width="1.300" d="M1774 1041C1766 1047 1767 1056 1773 1059M1774 1055V1060H1769M1785 1060C1793 1055 1793 1046 1787 1042M1785 1046V1041H1790"/>
    </g>
  </svg>
`);
</script>
</body>
</html>
